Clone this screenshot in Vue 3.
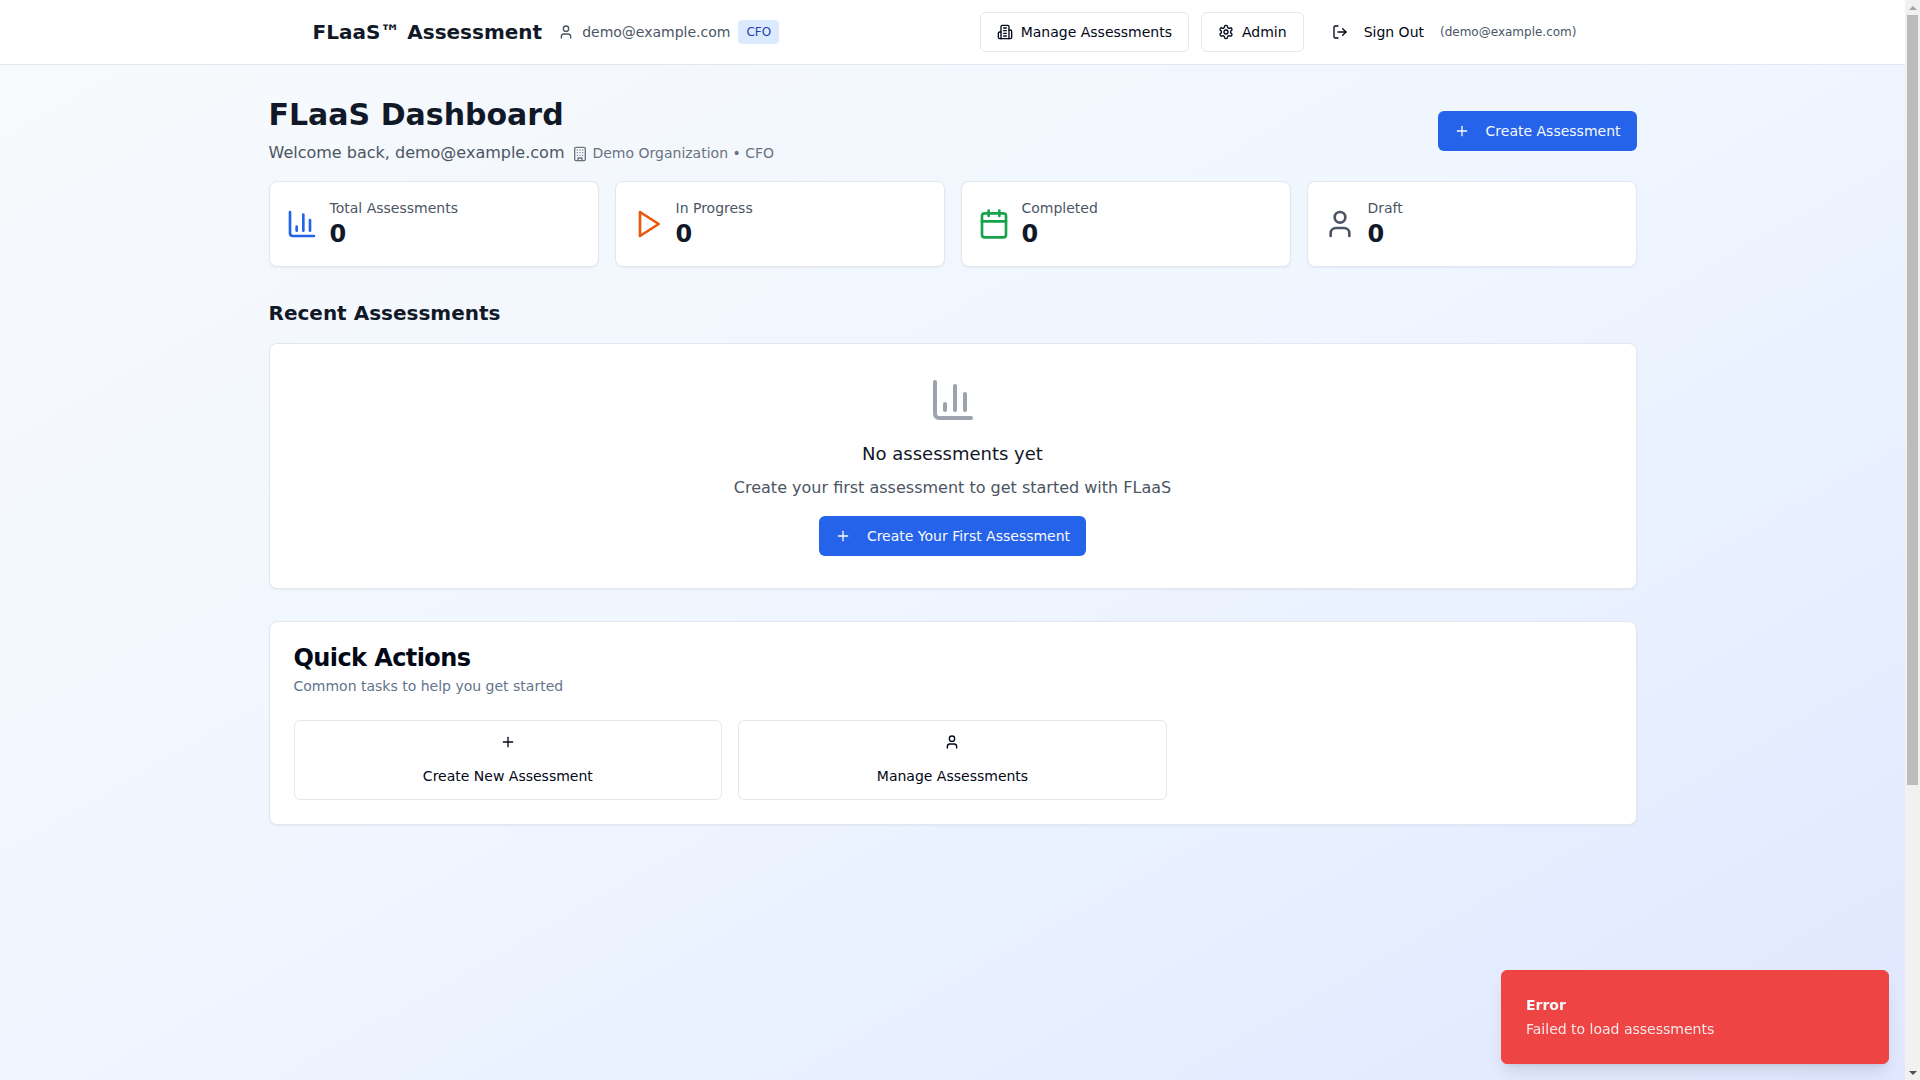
<script setup>
const stats = [
  { label: 'Total Assessments', value: 0, icon: 'chart', tone: 'blue' },
  { label: 'In Progress', value: 0, icon: 'play', tone: 'orange' },
  { label: 'Completed', value: 0, icon: 'calendar', tone: 'green' },
  { label: 'Draft', value: 0, icon: 'user', tone: 'gray' },
]
</script>

<template>
  <div class="page">
    <header class="nav">
      <div class="nav-inner">
        <div class="logo"></div>
        <span class="brand">FLaaS™ Assessment</span>
        <div class="who">
          <svg class="i16" viewBox="0 0 24 24"><path d="M19 21v-2a4 4 0 0 0-4-4H9a4 4 0 0 0-4 4v2" /><circle cx="12" cy="7" r="4" /></svg>
          <span class="who-mail">demo@example.com</span>
          <span class="role">CFO</span>
        </div>
        <nav class="nav-right">
          <button class="btn outline">
            <svg class="i16" viewBox="0 0 24 24"><path d="M6 22V4a2 2 0 0 1 2-2h8a2 2 0 0 1 2 2v18Z" /><path d="M6 12H4a2 2 0 0 0-2 2v6a2 2 0 0 0 2 2h2" /><path d="M18 9h2a2 2 0 0 1 2 2v9a2 2 0 0 1-2 2h-2" /><path d="M10 6h4" /><path d="M10 10h4" /><path d="M10 14h4" /><path d="M10 18h4" /></svg>
            Manage Assessments
          </button>
          <button class="btn outline">
            <svg class="i16" viewBox="0 0 24 24"><path d="M12.22 2h-.44a2 2 0 0 0-2 2v.18a2 2 0 0 1-1 1.73l-.43.25a2 2 0 0 1-2 0l-.15-.08a2 2 0 0 0-2.73.73l-.22.38a2 2 0 0 0 .73 2.73l.15.1a2 2 0 0 1 1 1.72v.51a2 2 0 0 1-1 1.74l-.15.09a2 2 0 0 0-.73 2.73l.22.38a2 2 0 0 0 2.73.73l.15-.08a2 2 0 0 1 2 0l.43.25a2 2 0 0 1 1 1.73V20a2 2 0 0 0 2 2h.44a2 2 0 0 0 2-2v-.18a2 2 0 0 1 1-1.73l.43-.25a2 2 0 0 1 2 0l.15.08a2 2 0 0 0 2.73-.73l.22-.39a2 2 0 0 0-.73-2.73l-.15-.08a2 2 0 0 1-1-1.74v-.5a2 2 0 0 1 1-1.74l.15-.09a2 2 0 0 0 .73-2.73l-.22-.38a2 2 0 0 0-2.73-.73l-.15.08a2 2 0 0 1-2 0l-.43-.25a2 2 0 0 1-1-1.73V4a2 2 0 0 0-2-2z" /><circle cx="12" cy="12" r="3" /></svg>
            Admin
          </button>
          <button class="btn ghost">
            <svg class="i16" viewBox="0 0 24 24"><path d="M9 21H5a2 2 0 0 1-2-2V5a2 2 0 0 1 2-2h4" /><polyline points="16 17 21 12 16 7" /><line x1="21" y1="12" x2="9" y2="12" /></svg>
            Sign Out
          </button>
          <span class="nav-mail">(demo@example.com)</span>
        </nav>
      </div>
    </header>

    <main class="main">
      <section class="head">
        <div>
          <h1>FLaaS Dashboard</h1>
          <div class="welcome">
            <span class="welcome-text">Welcome back, demo@example.com</span>
            <span class="org">
              <svg class="i16 org-icon" viewBox="0 0 24 24"><rect x="4" y="2" width="16" height="20" rx="2" /><path d="M9 22v-4h6v4" /><path d="M8 6h.01M16 6h.01M12 6h.01M12 10h.01M12 14h.01M16 10h.01M16 14h.01M8 10h.01M8 14h.01" /></svg>
              Demo Organization • CFO
            </span>
          </div>
        </div>
        <button class="btn primary">
          <svg class="i16" viewBox="0 0 24 24"><path d="M5 12h14" /><path d="M12 5v14" /></svg>
          Create Assessment
        </button>
      </section>

      <section class="stats">
        <div v-for="s in stats" :key="s.label" class="card stat">
          <svg class="i32" :class="s.tone" viewBox="0 0 24 24">
            <template v-if="s.icon === 'chart'"><path d="M3 3v16a2 2 0 0 0 2 2h16" /><path d="M18 17V9" /><path d="M13 17V5" /><path d="M8 17v-3" /></template>
            <polygon v-else-if="s.icon === 'play'" points="6 3 20 12 6 21 6 3" />
            <template v-else-if="s.icon === 'calendar'"><path d="M8 2v4" /><path d="M16 2v4" /><rect x="3" y="4" width="18" height="18" rx="2" /><path d="M3 10h18" /></template>
            <template v-else><path d="M19 21v-2a4 4 0 0 0-4-4H9a4 4 0 0 0-4 4v2" /><circle cx="12" cy="7" r="4" /></template>
          </svg>
          <div>
            <p class="stat-label">{{ s.label }}</p>
            <p class="stat-value">{{ s.value }}</p>
          </div>
        </div>
      </section>

      <h2 class="recent">Recent Assessments</h2>

      <section class="card empty">
        <svg class="i48" viewBox="0 0 24 24"><path d="M3 3v16a2 2 0 0 0 2 2h16" /><path d="M18 17V9" /><path d="M13 17V5" /><path d="M8 17v-3" /></svg>
        <h3>No assessments yet</h3>
        <p>Create your first assessment to get started with FLaaS</p>
        <button class="btn primary">
          <svg class="i16" viewBox="0 0 24 24"><path d="M5 12h14" /><path d="M12 5v14" /></svg>
          Create Your First Assessment
        </button>
      </section>

      <section class="card quick">
        <h3 class="quick-title">Quick Actions</h3>
        <p class="quick-sub">Common tasks to help you get started</p>
        <div class="quick-grid">
          <button class="quick-btn">
            <svg class="i16" viewBox="0 0 24 24"><path d="M5 12h14" /><path d="M12 5v14" /></svg>
            Create New Assessment
          </button>
          <button class="quick-btn">
            <svg class="i16" viewBox="0 0 24 24"><path d="M19 21v-2a4 4 0 0 0-4-4H9a4 4 0 0 0-4 4v2" /><circle cx="12" cy="7" r="4" /></svg>
            Manage Assessments
          </button>
        </div>
      </section>
    </main>

    <aside class="toast">
      <div class="toast-title">Error</div>
      <div class="toast-desc">Failed to load assessments</div>
    </aside>

    <div class="scrollbar" aria-hidden="true">
      <span class="arrow up"></span>
      <span class="thumb"></span>
      <span class="arrow down"></span>
    </div>
  </div>
</template>

<style scoped>
* { box-sizing: border-box; }
p, h1, h2, h3 { margin: 0; }
svg { fill: none; stroke: currentColor; stroke-width: 2; stroke-linecap: round; stroke-linejoin: round; flex: none; display: block; }
.i16 { width: 16px; height: 16px; }
.i32 { width: 32px; height: 32px; }
.i48 { width: 48px; height: 48px; color: #9ca3af; }
.blue { color: #2563eb; }
.orange { color: #ea580c; }
.green { color: #16a34a; }
.gray { color: #4b5563; }

.page {
  width: calc(100vw - 15px);
  height: 100vh;
  overflow: hidden;
  font-family: "DejaVu Sans", sans-serif;
  font-size: 14px;
  line-height: 20px;
  color: #111827;
  background: linear-gradient(to bottom right, #f8fafc, #eff6ff, #e0e7ff);
}
.nav { height: 65px; background: #fff; border-bottom: 1px solid #e2e8f0; }
.nav-inner { max-width: 1400px; height: 64px; margin: 0 auto; padding: 0 16px; display: flex; align-items: center; }
.logo { width: 32px; height: 32px; margin-right: 12px; }
.brand { font-size: 20px; line-height: 28px; font-weight: 700; color: #111827; }
.who { display: flex; align-items: center; gap: 8px; margin-left: 16px; color: #4b5563; }
.role { height: 24px; padding: 2px 8px; font-size: 12px; border-radius: 4px; background: #dbeafe; color: #1e40af; }
.nav-right { display: flex; align-items: center; gap: 12px; margin-left: auto; padding-right: 60px; }
.nav-mail { font-size: 12px; color: #4b5563; margin-left: -12px; }

.btn {
  height: 40px; padding: 0 16px; display: inline-flex; align-items: center; gap: 8px;
  font: inherit; font-weight: 500; border-radius: 6px; border: 0; background: transparent; color: #020817; white-space: nowrap;
}
.outline { background: #fff; border: 1px solid #e2e8f0; }
.ghost { gap: 16px; }
.primary { gap: 16px; background: #2563eb; color: #f8fafc; }

.main { max-width: 1400px; margin: 0 auto; padding: 32px 16px; }
.head { display: flex; justify-content: space-between; align-items: center; margin-bottom: 16px; }
h1 { font-size: 30px; line-height: 36px; font-weight: 700; color: #111827; }
.welcome { display: flex; align-items: center; gap: 8px; margin-top: 8px; }
.welcome-text { font-size: 16px; line-height: 24px; color: #4b5563; }
.org { display: flex; align-items: center; gap: 4px; color: #6b7280; }
.org-icon { margin-top: 2px; }
.card { background: #fff; border: 1px solid #e2e8f0; border-radius: 8px; box-shadow: 0 1px 2px rgba(0,0,0,.05); }
.stats { display: grid; grid-template-columns: repeat(4, 1fr); gap: 16px; margin-bottom: 32px; }
.stat { display: flex; align-items: center; gap: 12px; padding: 16px; }
.stat-label { color: #4b5563; }
.stat-value { font-size: 24px; line-height: 32px; font-weight: 700; color: #111827; }
.recent { font-size: 20px; line-height: 28px; font-weight: 600; color: #111827; margin-bottom: 16px; }
.empty { display: flex; flex-direction: column; align-items: center; padding: 32px; margin-bottom: 32px; }
.empty h3 { font-size: 18px; line-height: 28px; font-weight: 500; margin-top: 16px; margin-bottom: 8px; }
.empty p { font-size: 16px; line-height: 24px; color: #4b5563; margin-bottom: 16px; }
.quick { padding: 24px; color: #020817; }
.quick-title { font-size: 24px; line-height: 24px; font-weight: 600; letter-spacing: -0.6px; }
.quick-sub { margin-top: 6px; color: #64748b; }
.quick-grid { display: grid; grid-template-columns: repeat(3, 1fr); gap: 16px; margin-top: 24px; }
.quick-btn {
  height: 80px; display: flex; flex-direction: column; align-items: center; justify-content: center; gap: 16px;
  font: inherit; font-weight: 500; color: #020817; background: #fff; border: 1px solid #e2e8f0; border-radius: 6px; padding: 8px 16px;
}
.toast {
  position: fixed; right: 31px; bottom: 16px; width: 388px; padding: 24px;
  display: grid; gap: 4px; border: 1px solid #ef4444; border-radius: 6px; background: #ef4444; color: #f8fafc;
  box-shadow: 0 10px 15px -3px rgba(0,0,0,.1), 0 4px 6px -4px rgba(0,0,0,.1);
}
.toast-title { font-weight: 600; }
.toast-desc { opacity: .9; }

.scrollbar { position: fixed; top: 0; right: 0; width: 15px; height: 100vh; background: #f1f1f1; display: flex; flex-direction: column; align-items: center; }
.arrow { flex: none; width: 15px; height: 15px; display: flex; justify-content: center; align-items: center; }
.arrow::before { content: ""; width: 0; height: 0; border-left: 4px solid transparent; border-right: 4px solid transparent; }
.up::before { border-bottom: 4px solid #a3a3a3; }
.down { margin-top: auto; }
.down::before { border-top: 4px solid #505050; }
.thumb { width: 11px; height: 770px; background: #bcbcbc; }
</style>
